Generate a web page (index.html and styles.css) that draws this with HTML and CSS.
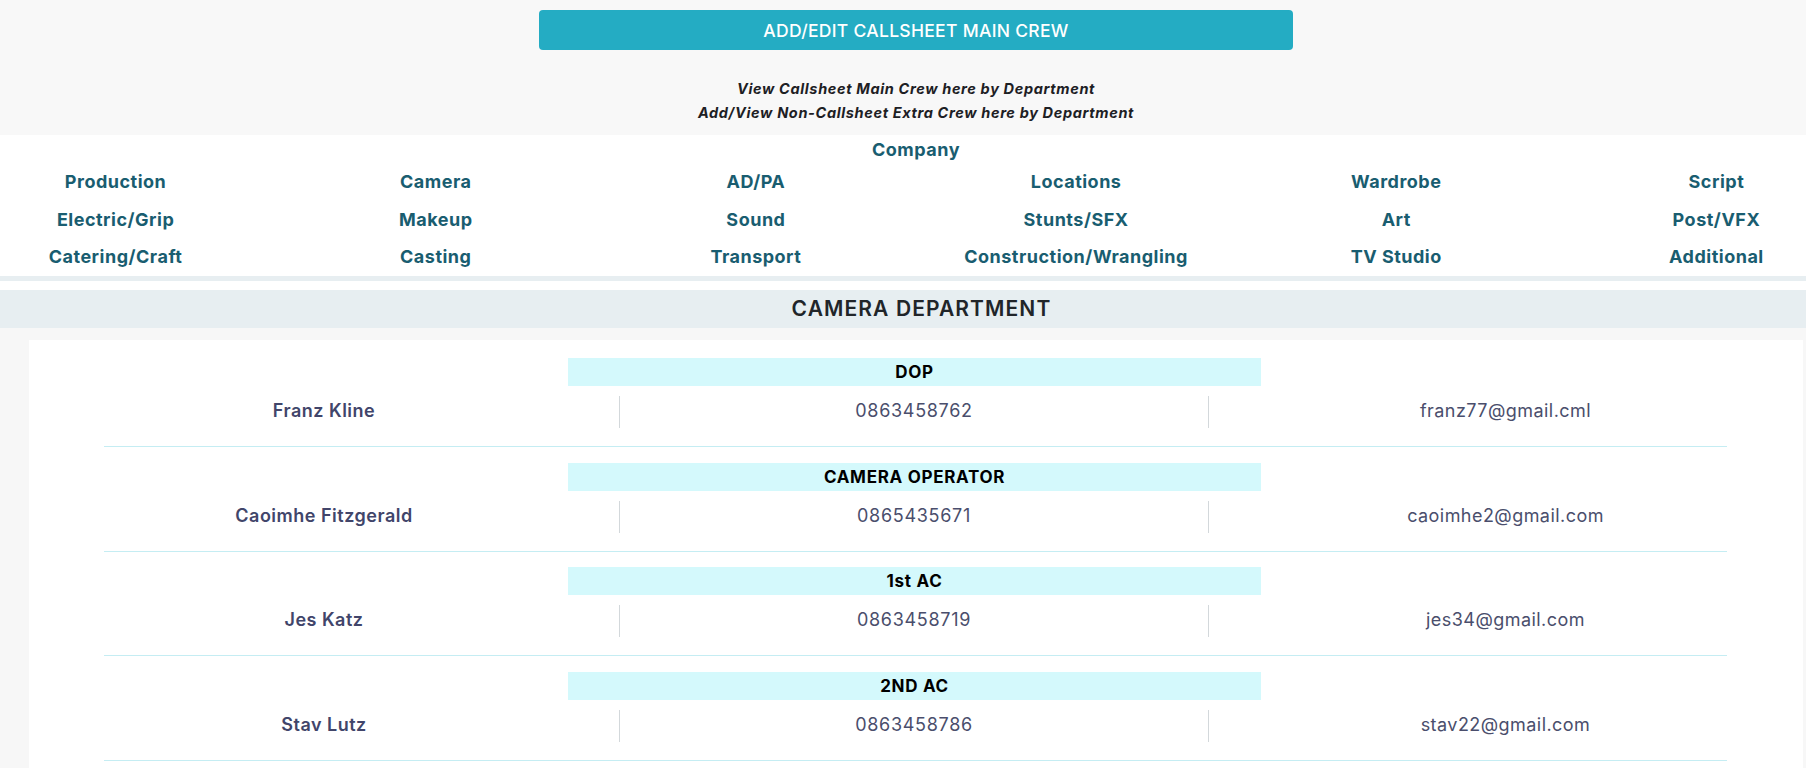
FILE: index.html
```html
<!DOCTYPE html>
<html lang="en">
<head>
<meta charset="utf-8">
<title>Callsheet Crew</title>
<link rel="stylesheet" href="styles.css">
</head>
<body>
<div class="page">
  <header class="top">
    <button class="main-btn" type="button">ADD/EDIT CALLSHEET MAIN CREW</button>
    <div class="hints">
      <p>View Callsheet Main Crew here by Department</p>
      <p>Add/View Non-Callsheet Extra Crew here by Department</p>
    </div>
  </header>

  <nav class="depts">
    <a class="dept company">Company</a>
    <div class="dept-grid">
      <a class="dept">Production</a>
      <a class="dept">Camera</a>
      <a class="dept">AD/PA</a>
      <a class="dept">Locations</a>
      <a class="dept">Wardrobe</a>
      <a class="dept">Script</a>
      <a class="dept">Electric/Grip</a>
      <a class="dept">Makeup</a>
      <a class="dept">Sound</a>
      <a class="dept">Stunts/SFX</a>
      <a class="dept">Art</a>
      <a class="dept">Post/VFX</a>
      <a class="dept">Catering/Craft</a>
      <a class="dept">Casting</a>
      <a class="dept">Transport</a>
      <a class="dept">Construction/Wrangling</a>
      <a class="dept">TV Studio</a>
      <a class="dept">Additional</a>
    </div>
  </nav>

  <div class="spacer"></div>

  <h2 class="dept-title">CAMERA DEPARTMENT</h2>

  <main class="crew-card">
    <section class="crew-row">
      <div class="role">DOP</div>
      <div class="info">
        <div class="name">Franz Kline</div>
        <div class="phone">0863458762</div>
        <div class="email">franz77@gmail.cml</div>
      </div>
    </section>
    <section class="crew-row">
      <div class="role">CAMERA OPERATOR</div>
      <div class="info">
        <div class="name">Caoimhe Fitzgerald</div>
        <div class="phone">0865435671</div>
        <div class="email">caoimhe2@gmail.com</div>
      </div>
    </section>
    <section class="crew-row">
      <div class="role">1st AC</div>
      <div class="info">
        <div class="name">Jes Katz</div>
        <div class="phone">0863458719</div>
        <div class="email">jes34@gmail.com</div>
      </div>
    </section>
    <section class="crew-row">
      <div class="role">2ND AC</div>
      <div class="info">
        <div class="name">Stav Lutz</div>
        <div class="phone">0863458786</div>
        <div class="email">stav22@gmail.com</div>
      </div>
    </section>
  </main>
</div>
</body>
</html>
```

FILE: styles.css
```css
html, body {
  margin: 0;
  padding: 0;
  overflow-x: hidden;
}

body {
  background: #f7f7f7;
  font-family: "Inter", "Noto Sans", sans-serif;
  color: #212529;
}

.page {
  width: 1832px;
}

/* ---------- top ---------- */
.top {
  background: #f8f8f8;
  display: flex;
  flex-direction: column;
  align-items: center;
  padding: 10px 0 10px;
  height: 115px;
}

.main-btn {
  width: 754px;
  height: 40px;
  border: none;
  border-radius: 4px;
  background: #24acc3;
  color: #ffffff;
  font-family: inherit;
  font-size: 17.5px;
  font-weight: 500;
  letter-spacing: 0.3px;
  cursor: pointer;
}

.hints {
  margin-top: 27px;
  text-align: center;
}

.hints p {
  margin: 0;
  font-size: 14.5px;
  font-weight: 700;
  font-style: italic;
  letter-spacing: 0.65px;
  line-height: 24px;
  color: #1d2024;
}

/* ---------- department nav ---------- */
.depts {
  background: #ffffff;
  display: flex;
  flex-direction: column;
  align-items: center;
  padding: 3px 0 7px;
  border-bottom: 5px solid #e7eef1;
  overflow: hidden;
}

.dept {
  color: #195d70;
  font-size: 18px;
  font-weight: 700;
  letter-spacing: 0.5px;
  line-height: 24px;
  text-align: center;
  white-space: nowrap;
}

.dept-grid {
  margin: 8px -44.5px 0;
  width: 1921px;
  display: grid;
  grid-template-columns: repeat(6, 1fr);
  row-gap: 13.5px;
}

.spacer {
  height: 9px;
  background: #ffffff;
}

/* ---------- department title ---------- */
.dept-title {
  margin: 0;
  height: 38px;
  line-height: 38px;
  padding-left: 11px;
  background: #e7eef1;
  text-align: center;
  font-size: 21px;
  font-weight: 600;
  letter-spacing: 1.1px;
  color: #212529;
}

/* ---------- crew card ---------- */
.crew-card {
  margin: 12px 29px 0;
  background: #ffffff;
  padding: 18px 76px 40px 75px;
  min-height: 400px;
}

.crew-row {
  display: flex;
  flex-direction: column;
  border-bottom: 1px solid #c5edf3;
  padding-bottom: 18px;
  margin-bottom: 15.5px;
}

.role {
  align-self: center;
  width: 603px;
  margin-left: -2px;
  height: 28px;
  line-height: 28px;
  padding: 0 45px;
  background: #d4f9fc;
  text-align: center;
  font-size: 17px;
  font-weight: 700;
  letter-spacing: 0.7px;
  color: #000000;
}

.info {
  margin-top: 10px;
  display: grid;
  grid-template-columns: 515px 590px 1fr;
  height: 32px;
  align-items: center;
}

.info > div {
  height: 32px;
  line-height: 29px;
  text-align: center;
  white-space: nowrap;
}

.name {
  padding-right: 75px;
  font-size: 18px;
  font-weight: 600;
  letter-spacing: 0.5px;
  color: #41456a;
}

.phone {
  border-left: 1px solid #d3d8db;
  border-right: 1px solid #d3d8db;
  font-size: 18px;
  letter-spacing: 0.7px;
  color: #4a4e6c;
}

.email {
  padding-left: 75px;
  font-size: 18px;
  letter-spacing: 0.45px;
  color: #4a4e6c;
}
```
